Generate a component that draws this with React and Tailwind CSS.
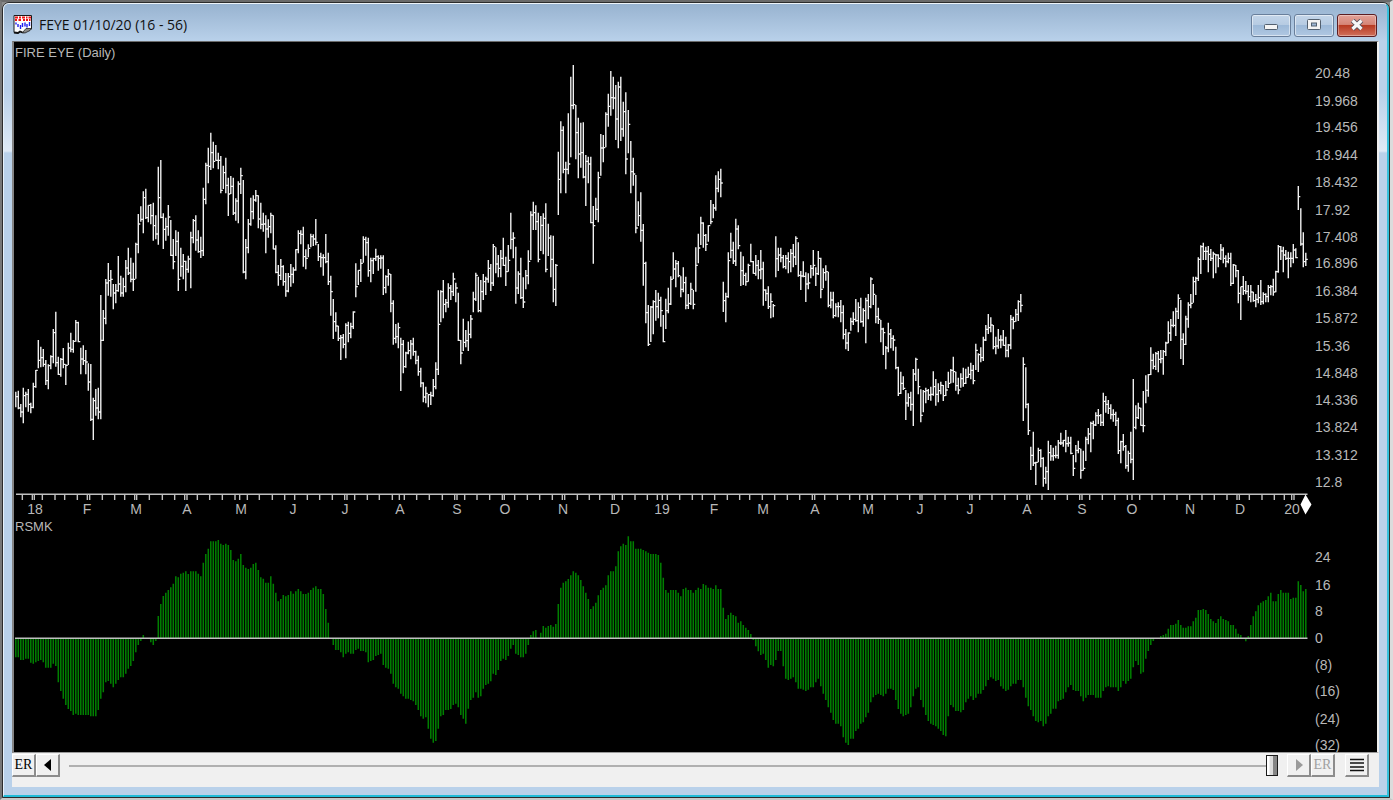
import React from "react";

const PITCH = 2.5;
const FIRST_X = 15.8;

// Each run of price bars holds "high low close" triples, in thirds of a unit below `top`.
const PRICE_RUNS = [
  {
    top: 120,
    bars: `815 862 830 812 868 864 852 892 876 803 910 827 815 862 823 807 875 853 848 880 862 788 865 800
750 803 751 660 745 721 680 742 713 687 740 733 720 795 782 733 808 737 706 748 710 627 730 638
575 740 728 710 765 763 714 770 718 684 745 733 733 795 736 668 735 684 638 697 688 660 698 664
600 665 608 605 667 665 683 763 717 676 735 722 690 763 726 730 812 786 732 903 898 833 960 842
807 887 864 803 898 876 525 898 661 570 663 595 477 613 489 429 527 482 450 530 478 492 568 519
492 550 512 408 515 492 467 530 519 473 530 500 420 517 444 383 465 459 413 487 478 428 513 478
368 476 373 282 400 312 259 305 298 214 340 233 206 297 293 256 307 256 252 313 287 248 362 317
286 358 342 140 374 233 120 295 292 280 387 328 293 362 320 255 347 291 300 408 406 357 448 425
331 408 364 335 513 478 383 470 439 402 478 424 422 513 448 407 458 417 335 505 353 297 370 302
286 392 360 331 398 395 350 414 392 203 408 238 128 253 136 83 190 139 38 150 98 65 145 124
75 122 121 98 148 121 108 220 211 137 207 158 113 220 196 173 288 222 168 222 199 173 285 279
235 302 243 184 310 192 143 222 167 180 460 456 357 478 383 297 400 312 233 317 275 226 298 240
210 245 227 226 325 297 248 328 313 278 335 312 286 400 327 298 353 320 278 340 286 286 388 387
376 460 457 435 497 466 417 480 440 436 497 485 459 530 513 459 517 470 432 500 463 442 490 450
388 452 389 331 400 340 331 373 343 320 440 410 388 448 415 373 412 385 341 382 350 343 378 357
297 376 367 372 423 410 398 442 413 403 467 413 342 430 425 398 495 485 467 587 515 537 657 605
577 635 618 617 663 655`,
  },
  {
    top: 180,
    bars: `465 540 473 462 505 493 430 535 436 425 487 460 428 475 440 394 447 396 250 352 320 271 315 271
237 306 250 169 248 178 170 227 188 173 290 272 233 307 242 233 282 236 206 243 230 226 272 235
226 266 234 226 345 323 286 340 290 267 317 282 282 397 370 361 494 475 432 490 470 428 505 443
473 633 493 480 580 560 515 563 519 485 523 512 480 538 492 473 527 515 512 553 541 527 587 575
563 622 609 607 667 651 620 670 640 642 682 644 635 675 647 597 650 620 547 628 568 331 585 433
331 427 335 300 415 373 357 397 368 310 383 324 315 360 335 278 348 297 308 367 324 338 483 481
480 553 519 416 513 487 450 502 482 424 513 463 405 475 417 335 397 357 278 363 286 290 397 392
300 397 335 282 360 305 290 345 297 240 308 265 252 333 309 192 318 200 202 280 252 225 292 265
210 292 235 173 258 256 230 318 275 195 275 241 98 208 178 157 235 174 200 371 324 274 342 282
233 357 353 292 384 366 270 328 287 211 313 244 94 240 105 65 150 98 76 150 125 98 247 238
108 213 136 100 223 115 70 277 268 131 228 174 166 292 238 167 367 328 252 378 256`,
  },
  {
    top: 55,
    bars: `290 480 373 199 415 226 214 355 343 320 415 343 175 358 327 65 307 151 30 163 149 150 313 233
188 370 297 203 338 293 202 370 366 300 453 319 305 385 327 305 505 503 453 626 512 428 495 463
350 502 368 237 362 279 240 322 278 172 277 178 116 215 154 48 182 128 65 163 129 90 255 192
80 280 96 65 258 222 140 245 170 112 358 312 165 295 208 258 415 350 308 392 357 360 535 519
439 513 482 412 560 526 507 692 625 620 805 773 750 873 868 753 861 756 736 838 740 705 797 755
713 790 736 725 815 767 780 862 860 731 822 767 698 775 747 664 750 673 592 672 642 615 697 626
618 667 662 664 727 703 637 712 683 665 763 751 717 762 745 683 750 703 705 763 748 577 710 631
536 625 579 485 570 504 502 578 541 537 588 568 511 560 512 435 508 500 447 490 459 361 467 400
349 412 373 341 427 384 680 771 737 713 802 725 592 728 617 533 610 586 560 627 618 491 633 522
511 583 572 590 693 647 604 690 661 653 692 680 626 680 631 566 622 620 618 656 655 600 662 631
615 673 645 585 673 642 620 752 705 703 738 716 694 762 755 715 790 740 747 787 752 544 667 611
578 648 600 578 622 608 600 640 635 600 643 610 592 655 620 582 652 595 567 637 606 544 630 550
562 665 661 648 705 663 619 667 664 652 741 687 655 703 684 630 670 640 585 662 631 637 693 656
588 660 610 608 730 703 640 700 653 631 677 650 650 757 751 710 760 735 710 790 782 745 785 755
742 787 755 735 802 773 751 853 838 822 883 864 832 888 834 788 827 800 772 810 793 732 800 797
742 832 757 728 803 800 760 815 767 728 865 737 717 793 755`,
  },
  {
    top: 260,
    bars: `52 145 57 72 135 103 105 190 170 143 192 178 180 247 207 203 285 218 258 328 264 188 277 222
207 265 235 226 272 240 260 328 323 320 408 400 335 402 370 349 390 385 390 480 429 400 440 413
395 452 433 327 498 342 293 363 298 326 403 380 388 487 466 390 457 395 383 430 392 387 420 405
380 422 403 334 407 380 357 437 403 370 427 392 365 403 376 375 423 407 363 408 390 335 384 370
327 370 331 290 368 335 335 392 377 353 403 390 340 383 356 323 380 370 326 372 352 320 353 343
308 358 331 315 373 362 251 330 271 280 336 284 262 307 293 230 303 240 195 243 208 162 222 203
172 217 195 195 268 260 230 283 258 207 266 240 226 265 240 210 257 256 230 292 271 252 292 255
165 268 178 170 208 185 147 185 163 121 183 125 102 157 136 292 483 313 322 445 433 430 525 512
560 630 586 515 618 609 605 675 607 563 607 571 568 622 595 592 680 655 620 671 635 542 690 578
555 602 588 563 602 587 557 595 586 540 596 549 518 555 549 540 560 541 510 577 551 530 560 549
530 583 580 585 648 625 555 607 571 542 580 566 566 656 631 572 632 625 530 603 538 504 553 522
485 577 490 482 538 495 457 498 467 447 492 467 462 498 487 398 498 424 408 458 433 420 462 445
433 478 464 448 485 463 455 498 482 473 582 572 542 610 545 522 572 560 555 626 617 572 635 580`,
  },
  {
    top: 170,
    bars: `785 880 868 627 930 772 706 778 743 698 747 714 713 767 766 663 787 767 616 700 661 612 680 614
532 615 571 551 598 589 546 600 551 543 607 568 540 580 566 540 614 545 515 558 519 454 520 489
447 513 466 424 472 466 413 498 424 373 447 385 390 567 508 490 585 523 437 525 447 397 473 405
372 415 400 320 398 335 320 375 325 262 333 268 226 312 230 218 270 244 230 270 244 228 307 253
237 273 265 245 325 252 252 310 255 253 292 265 222 270 240 232 280 265 256 292 275 248 280 265
248 348 340 282 342 285 285 322 302 300 400 370 350 450 350 318 375 362 333 373 364 345 392 380
345 397 366 365 395 392 372 412 388 345 400 383 330 405 395 367 403 373 370 397 380 345 397 352
345 376 350 326 377 366 302 367 305 225 308 230 228 270 243 230 307 255 240 270 265 245 325 265
247 292 265 222 280 240 235 265 263 48 120 80 115 227 222 187 292 275 248 288 268`,
  },
];

// Indicator bar tips, in thirds of a unit below y = 480; the zero line is at 475.
const RSMK = `532 532 540 540 536 536 548 551 547 543 540 547 563 563 563 551 558 607 633 656 675 687 693 705 701
705 705 705 705 705 709 709 709 690 656 637 607 603 611 622 611 600 592 592 581 566 558 543 517 495 483
465 475 475 487 495 483 408 372 348 338 330 322 311 289 292 281 278 274 282 274 274 274 281 289 248 222
206 184 184 184 180 191 195 191 195 210 240 244 236 222 255 263 267 263 252 248 270 292 296 308 308 289
311 338 364 357 345 349 345 334 341 334 327 334 342 342 338 330 323 319 327 327 342 387 428 475 495 510
510 517 532 521 517 521 521 510 506 513 513 517 547 543 540 528 525 521 555 563 566 581 611 622 626 641
649 656 656 660 664 675 690 709 716 712 746 776 788 783 746 709 705 690 690
687 675 671 682 705 716 731 686 660 653 637 653 649 626 615 611 604 581 585 570 543 536 540 528 506 495
521 525 532 532 521 495 465 454 450 475 458 438 443 438 435 440 432 372 323 308 304 297 286 274 278 286
300 319 338 357 387 379 368 346 330 323 316 286 274 274 259 214 199 191 195 169 184 184 206 206 206 210
214 218 222 222 222 225 248 293 330 338 330 330 330 338 349 327 323 330 330 338 330 323 327 312 316 323
323 327 316 327 327 383 417 405 398 405 409 428 424 435 443 450 462 480 499 514 525 521 540 563 555 559
540 513 513 559 596 600 596 592 607 626 626 629 633 629 622 622 607 596 619 641 660 682 698 720 731 731
739 772 788 795 776 776 753 746 731 727 712 698 667 652 645 641
645 649 641 626 626 630 660 687 701 709 705 701 682 649 626 622 660 682 705 723 731 735 739 746 753 765
769 709 675 682 693 693 697 690 667 656 649 660 653 641 641 630 619 600 592 596 603 600 619 626 633 629
619 611 611 600 600 622 653 679 690 709 723 727 723 739 731 709 701 686 686 664 660 656 637 622 615 630
633 633 649 664 653 645 645 645 653 653 653 633 622 619 622 622 622 633 622 603 611 603 596 562 543 555
581 577 536 513 495 483 475 475 468 465 461 446 435 435 431 420 435 443 443 439 439 424 413 390 390 387
390 402 417 424 429 417 409 417 420 424 435 435 446 461 465 475 484 468 435 409 394 376 368 364 360 349
338 364 364 342 330 338 338 338 357 353 353 304 315 334 327`;

const TICK_RUNS = [
  [10, "37 67 73 97 135 164 202 232 239 277 314 344 374 380 418 457 494 524 531 562 599 637 675 689 712 748 787 824 854 892 929 967 1004 1011 1034 1072 1108 1147 1168 1183 1220 1258 1297"],
  [440, "7 44 51 74 111 149 187 193 224 262 299 337 367 374 412 448 479 517 523 547 585 622 652 667 682 719 757 787 824 862 899 929 967 1004 1042 1079 1117 1124 1154 1192 1229 1259 1282 1297"],
  [870, "6 44 82 119 150 156 195 225 262 299 306 329 366 404 442 471 479 516 554 592 629 636 659 697 734 772 786 809 846 883 921 959 996 1033 1071 1101 1108 1138 1176 1213 1243 1265 1272"],
];

const MONTHS = [
  ["18", 35], ["F", 87], ["M", 136], ["A", 187], ["M", 241], ["J", 293], ["J", 345], ["A", 400],
  ["S", 457], ["O", 505], ["N", 563], ["D", 615], ["19", 662], ["F", 714], ["M", 763], ["A", 815],
  ["M", 868], ["J", 920], ["J", 970], ["A", 1027], ["S", 1082], ["O", 1132], ["N", 1190], ["D", 1240],
  ["20", 1292],
];

const PRICE_LABELS = [
  ["20.48", 73], ["19.968", 101], ["19.456", 127], ["18.944", 155], ["18.432", 182], ["17.92", 210],
  ["17.408", 237], ["16.896", 263], ["16.384", 291], ["15.872", 318], ["15.36", 346], ["14.848", 373],
  ["14.336", 400], ["13.824", 427], ["13.312", 455], ["12.8", 482],
];

const RSMK_LABELS = [
  ["24", 557], ["16", 585], ["8", 611], ["0", 638], ["(8)", 665], ["(16)", 691], ["(24)", 719], ["(32)", 745],
];

const numbers = (text) => text.trim().split(/\s+/).map(Number);
const f = (n) => n.toFixed(2);

function pricePath() {
  let d = "";
  let i = 0;
  for (const run of PRICE_RUNS) {
    const v = numbers(run.bars);
    for (let k = 0; k < v.length; k += 3) {
      const x = FIRST_X + i * PITCH;
      const [high, low, close] = [v[k], v[k + 1], v[k + 2]].map((n) => run.top + n / 3);
      d += `M${f(x)} ${f(high)}V${f(low)}M${f(x)} ${f(close)}h2`;
      i += 1;
    }
  }
  return d;
}

const PRICE_PATH = pricePath();
const RSMK_PATH = numbers(RSMK)
  .map((n, i) => (n === 475 ? "" : `M${f(FIRST_X + i * PITCH)} 638.2V${f(480 + n / 3)}`))
  .join("");
const TICK_PATH = TICK_RUNS.map(([left, text]) =>
  numbers(text).map((n) => `M${f(left + n / 3)} 494V500`).join("")
).join("");

function Chart() {
  return (
    <svg
      viewBox="14 42 1363 710"
      role="img"
      aria-label="FIRE EYE daily price bars with RSMK histogram"
      className="block h-auto w-full bg-black font-['Liberation_Sans',Arial,sans-serif] text-[14px]"
    >
      <path d={PRICE_PATH} fill="none" stroke="#f0f0f0" strokeWidth="1.4" />
      <path d={RSMK_PATH} fill="none" stroke="#008000" strokeWidth="1.5" />
      <path d="M15 638.2H1307.500" stroke="#c0c0c0" strokeWidth="1.4" />
      <path d="M16 494.3H1307.500" stroke="#c0c0c0" strokeWidth="1.4" />
      <path d={TICK_PATH} stroke="#c0c0c0" strokeWidth="1.4" />
      <g fill="#b8b8b8">
        <g className="text-[13px]">
          <text x="15" y="57">FIRE EYE (Daily)</text>
          <text x="15" y="531">RSMK</text>
        </g>
        {MONTHS.map(([label, x]) => (
          <text key={x} x={x} y="514" textAnchor="middle">{label}</text>
        ))}
        {[...PRICE_LABELS, ...RSMK_LABELS].map(([label, y]) => (
          <text key={y} x="1315" y={y + 5}>{label}</text>
        ))}
      </g>
      <path d="M1305.500 494.500L1311.500 504.500L1305.500 514.500L1300.500 504.500Z" fill="#fff" />
    </svg>
  );
}

function AppIcon() {
  return (
    <svg viewBox="0 0 20 19" className="h-[19px] w-5" aria-hidden="true">
      <path d="M1 .5H18.500V14L14.500 15.500L10 18L7 16.500L5 18L1 17.500Z" fill="#fff" stroke="#1c1c1c" />
      <path d="M1 17.500L5 18L7 16.500L9.500 17.500" fill="none" stroke="#111" strokeWidth="1.8" />
      <path d="M9.500 17.500L13 13.500H18.500L17 15.500L12 18Z" fill="#8a8a8a" stroke="#222" strokeWidth=".8" />
      <path d="M2 2.500H5M6 2.500H8M9 2.500H12M13 2.500H14.500M15.500 2.500H18M2 5H4M5.500 5H8M10 5H12M13 5H15M16 5H17.500" stroke="#f01414" strokeWidth="2" />
      <path d="M3 7.500V9.500M5 9V12M7.500 10V14M9.500 8V12M12 7.500V11.500M14 9V12.500M16.500 7V11" stroke="#2020f0" strokeWidth="1.4" />
    </svg>
  );
}

const CAPTION =
  "flex h-[23px] w-10 items-center justify-center rounded-[3px] border border-[#697f9b] shadow-[inset_0_0_0_1px_rgba(255,255,255,0.5)]";
const CAPTION_BLUE =
  "bg-[linear-gradient(#c3d5e9_0%,#b6cbe2_48%,#9db9d8_50%,#b0c8e2_100%)]";

function TitleBar() {
  return (
    <header className="flex h-[37px] items-center justify-between bg-gradient-to-b from-[#98b3d0] to-[#b9d1ea] pr-[10px] pl-[9px]">
      <div className="flex items-center gap-[6px] pt-1">
        <AppIcon />
        <h1 className="font-['Open_Sans','Noto_Sans',sans-serif] text-[14px] leading-5 text-[#101010]">
          FEYE 01/10/20 (16 - 56)
        </h1>
      </div>
      <div className="flex gap-[3px] pt-[5px]">
        <button type="button" aria-label="Minimize" className={`${CAPTION} ${CAPTION_BLUE}`}>
          <svg viewBox="0 0 16 12" className="h-3 w-4" aria-hidden="true">
            <rect x="1.500" y="5.500" width="13" height="5" rx="1" fill="#f4f4f4" stroke="#53606f" />
          </svg>
        </button>
        <button type="button" aria-label="Maximize" className={`${CAPTION} ${CAPTION_BLUE}`}>
          <svg viewBox="0 0 16 12" className="h-3 w-4" aria-hidden="true">
            <rect x="1.500" y=".5" width="13" height="10" rx="1" fill="#f4f4f4" stroke="#53606f" />
            <rect x="5.500" y="4" width="5" height="3" fill="#9db6d4" stroke="#53606f" />
          </svg>
        </button>
        <button
          type="button"
          aria-label="Close"
          className="flex h-[23px] w-10 items-center justify-center rounded-[3px] border border-[#5c1d22] bg-[linear-gradient(#e2a198_0%,#d68577_45%,#b83a22_50%,#d0705c_100%)] shadow-[inset_0_0_0_1px_rgba(255,255,255,0.35)]"
        >
          <svg viewBox="0 0 16 12" className="h-3 w-4" aria-hidden="true">
            <path d="M3.500 1.500L12.500 10M12.500 1.500L3.500 10" stroke="#53505c" strokeWidth="5" />
            <path d="M3.500 1.500L12.500 10M12.500 1.500L3.500 10" stroke="#f6f6f6" strokeWidth="3.2" />
          </svg>
        </button>
      </div>
    </header>
  );
}

const TOOL =
  "flex h-[23px] w-6 shrink-0 items-center justify-center border-t border-r-2 border-b-2 border-l border-t-white border-r-[#8c8c8c] border-b-[#8c8c8c] border-l-white bg-[#f0f0f0] font-['Liberation_Serif','Times_New_Roman',serif] text-[14px] leading-none";

function Toolbar() {
  return (
    <footer className="flex h-[34px] items-start bg-[#f0f0f0] pt-[1px] pr-[10px]">
      <button type="button" className={`${TOOL} text-black`}>ER</button>
      <button type="button" aria-label="Step back" className={`${TOOL} text-black`}>
        <svg viewBox="0 0 8 12" className="h-3 w-2" aria-hidden="true">
          <path d="M7 0V12L0 6Z" fill="#000" />
        </svg>
      </button>
      <input
        type="range"
        aria-label="Chart position"
        min="0"
        max="516"
        defaultValue="516"
        className="mr-[9px] ml-[9px] h-[23px] min-w-0 flex-1 appearance-none bg-[linear-gradient(#b0b0b0,#b0b0b0)] bg-[length:100%_2px] bg-center bg-no-repeat [&::-webkit-slider-thumb]:h-[21px] [&::-webkit-slider-thumb]:w-3 [&::-webkit-slider-thumb]:appearance-none [&::-webkit-slider-thumb]:border [&::-webkit-slider-thumb]:border-[#1a1a1a] [&::-webkit-slider-thumb]:bg-[linear-gradient(90deg,#fff_0%,#fff_20%,#dcdcdc_30%,#dcdcdc_55%,#858585_65%,#858585_100%)]"
      />
      <button type="button" disabled aria-label="Step forward" className={`${TOOL} text-[#a0a0a0]`}>
        <svg viewBox="0 0 8 12" className="h-3 w-2" aria-hidden="true">
          <path d="M1 0V12L8 6Z" fill="#9a9a9a" />
        </svg>
      </button>
      <button type="button" disabled className={`${TOOL} text-[#a0a0a0]`}>ER</button>
      <button type="button" aria-label="Chart list" className={`${TOOL} ml-[10px]`}>
        <svg viewBox="0 0 16 14" className="h-[14px] w-4" aria-hidden="true">
          <path d="M1 1.500H15M1 5H15M1 9H15M1 12.500H15" stroke="#111" strokeWidth="1.3" />
        </svg>
      </button>
    </footer>
  );
}

export default function App() {
  return (
    <div className="border-t-2 border-r-[3px] border-b-2 border-l-2 border-t-[#6a6a6a] border-r-[#dcdcdc] border-b-[#c8c8c8] border-l-[#777777] bg-[#8a8a8a]">
      <main className="rounded-t-[7px] border border-[#2c2c2c]">
        <div className="overflow-hidden rounded-t-[6px] border-t border-r-2 border-b-2 border-l border-t-[#eef4fa] border-r-[#35c1dc] border-b-[#20bcd8] border-l-[#e6f1fa] bg-[#b9d1ea]">
          <TitleBar />
          <div className="bg-[linear-gradient(#b9d1ea,#b9d1ea_50px,#dfeaf6_110px,#b9d1ea_112px)] px-2 pb-2">
            <div className="border-t border-r-2 border-b border-l-2 border-t-[#6c6c6c] border-r-[#f0f0f0] border-b-[#9a9a9a] border-l-[#858585]">
              <Chart />
            </div>
            <Toolbar />
          </div>
        </div>
      </main>
    </div>
  );
}
